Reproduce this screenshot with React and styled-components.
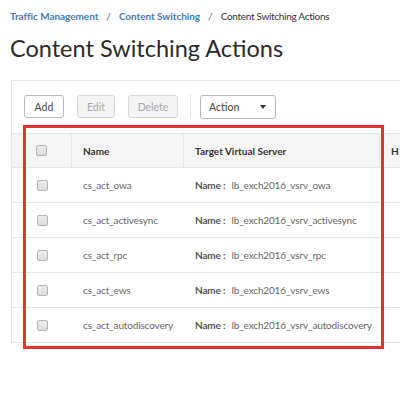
import React from 'react';
import styled, { createGlobalStyle } from 'styled-components';

const GlobalStyle = createGlobalStyle`
  html, body {
    margin: 0;
    padding: 0;
    background: #ffffff;
    overflow: hidden;
  }
  body {
    font-family: Lato, "Noto Sans", sans-serif;
    color: #333;
  }
`;

const Page = styled.div`
  width: 400px;
  height: 396px;
  overflow: hidden;
  padding-left: 10px;
  box-sizing: border-box;
`;

const Breadcrumb = styled.div`
  display: flex;
  align-items: center;
  gap: 8px;
  padding-top: 9px;
  height: 14px;
  font-size: 10px;
  line-height: 14px;
`;

const Crumb = styled.span`
  color: ${p => (p.current ? '#333' : '#4a78b0')};
  font-weight: ${p => (p.current ? 400 : 700)};
  letter-spacing: ${p => (p.current ? '-0.3px' : '-0.05px')};
`;

const Slash = styled.span`
  color: #555;
`;

const Title = styled.h1`
  margin: 10px 0 0;
  font-size: 23.5px;
  line-height: 30px;
  font-weight: 400;
  color: #2b2b2b;
`;

const Panel = styled.div`
  position: relative;
  margin: 17px 0 0 1px;
  width: 420px;
  border: 1px solid #e6e6e6;
  border-right: none;
  border-bottom: none;
  padding-top: 13px;
`;

const Toolbar = styled.div`
  display: flex;
  align-items: center;
  gap: 13px;
  padding-left: 12px;
  height: 25px;
  margin-bottom: 14px;
`;

const Button = styled.button`
  height: 23px;
  width: ${p => p.w}px;
  padding: 0;
  box-sizing: border-box;
  border-radius: 3px;
  font-family: inherit;
  font-size: 10.5px;
  background: ${p => (p.disabled ? '#f3f3f3' : '#fff')};
  border: 1px solid ${p => (p.disabled ? '#d9d9d9' : '#b9b9b9')};
  color: ${p => (p.disabled ? '#a8a8a8' : '#444')};
`;

const Separator = styled.div`
  width: 1px;
  height: 25px;
  background: #e2e2e2;
  margin: 0 -4px 0 -1px;
`;

const Select = styled.div`
  display: flex;
  align-items: center;
  justify-content: space-between;
  box-sizing: border-box;
  width: 76px;
  height: 24px;
  padding: 0 9px 0 8px;
  border: 1px solid #b9b9b9;
  border-radius: 3px;
  font-size: 10.5px;
  color: #444;
`;

const Caret = styled.span`
  width: 0;
  height: 0;
  border-left: 3.5px solid transparent;
  border-right: 3.5px solid transparent;
  border-top: 4px solid #333;
`;

const Table = styled.div`
  display: grid;
  grid-template-columns: 60px 112px 196px 1fr;
`;

const HeadCell = styled.div`
  height: 35px;
  box-sizing: border-box;
  display: flex;
  align-items: center;
  justify-content: ${p => (p.center ? 'center' : 'flex-start')};
  padding-left: ${p => (p.center ? 0 : 11)}px;
  background: #f5f5f5;
  border-top: 1px solid #e6e6e6;
  border-bottom: 1px solid #e6e6e6;
  border-right: 1px solid #e6e6e6;
  font-size: 10px;
  font-weight: 700;
  color: #333;
`;

const Cell = styled.div`
  height: 35px;
  box-sizing: border-box;
  display: flex;
  align-items: center;
  justify-content: ${p => (p.center ? 'center' : 'flex-start')};
  padding-left: ${p => (p.center ? 0 : 11)}px;
  border-bottom: 1px solid #e6e6e6;
  font-size: 10px;
  letter-spacing: -0.15px;
  color: #666;
  white-space: nowrap;
`;

const Check = styled.span`
  width: 9px;
  height: 9px;
  border: 1px solid #b5b5b5;
  border-radius: 2px;
  background: linear-gradient(#ececec, #dcdcdc);
`;

const Label = styled.b`
  font-weight: 700;
  color: #555;
  margin-right: 6px;
`;

const Highlight = styled.div`
  position: absolute;
  left: 11px;
  top: 44px;
  width: 361px;
  height: 224px;
  box-sizing: border-box;
  border: 3px solid #e8302f;
  pointer-events: none;
`;

const rows = [
  ['cs_act_owa', 'lb_exch2016_vsrv_owa'],
  ['cs_act_activesync', 'lb_exch2016_vsrv_activesync'],
  ['cs_act_rpc', 'lb_exch2016_vsrv_rpc'],
  ['cs_act_ews', 'lb_exch2016_vsrv_ews'],
  ['cs_act_autodiscovery', 'lb_exch2016_vsrv_autodiscovery'],
];

export default function App() {
  return (
    <Page>
      <GlobalStyle />
      <Breadcrumb>
        <Crumb>Traffic Management</Crumb>
        <Slash>/</Slash>
        <Crumb>Content Switching</Crumb>
        <Slash>/</Slash>
        <Crumb current>Content Switching Actions</Crumb>
      </Breadcrumb>
      <Title>Content Switching Actions</Title>
      <Panel>
        <Toolbar>
          <Button w={40}>Add</Button>
          <Button w={38} disabled>Edit</Button>
          <Button w={50} disabled>Delete</Button>
          <Separator />
          <Select>
            Action
            <Caret />
          </Select>
        </Toolbar>
        <Table>
          <HeadCell center><Check /></HeadCell>
          <HeadCell>Name</HeadCell>
          <HeadCell>Target Virtual Server</HeadCell>
          <HeadCell>H</HeadCell>
          {rows.map(([name, target]) => (
            <React.Fragment key={name}>
              <Cell center><Check /></Cell>
              <Cell>{name}</Cell>
              <Cell>
                <Label>Name :</Label>
                {target}
              </Cell>
              <Cell />
            </React.Fragment>
          ))}
        </Table>
        <Highlight />
      </Panel>
    </Page>
  );
}
